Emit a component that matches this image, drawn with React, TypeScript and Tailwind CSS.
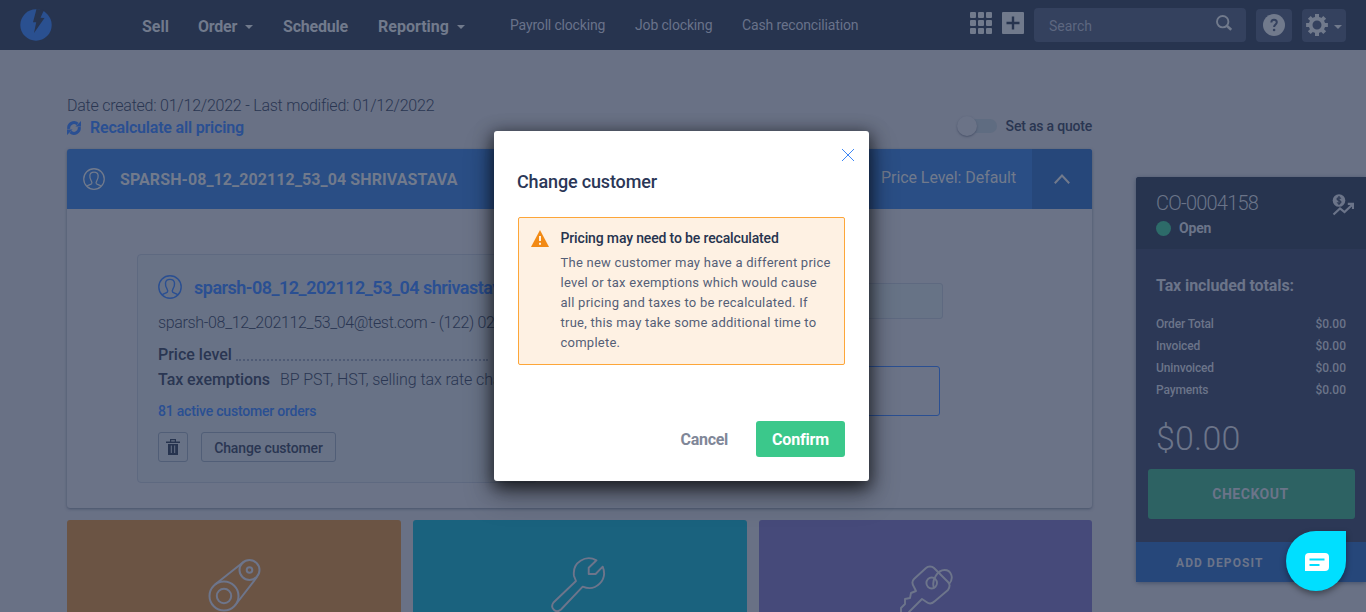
import React from "react";

function UserIcon({ className }: { className: string }) {
  return (
    <svg viewBox="0 0 24 24" className={className} fill="none" stroke="currentColor" strokeWidth="1.4" strokeLinejoin="round">
      <circle cx="12" cy="12" r="11.2" />
      <path d="M4.2 19.8c1.3-1.4 4.2-1.5 5.2-2.8.5-.7.2-2-.3-2.8-1.4-2-1.8-4.4-1.6-6.2C7.7 5.700 9.700 4.400 12 4.400s4.300 1.300 4.500 3.600c.2 1.800-.2 4.200-1.600 6.200-.5.800-.8 2.100-.3 2.800 1 1.300 3.900 1.400 5.200 2.800" />
    </svg>
  );
}

function Caret() {
  return (
    <svg viewBox="0 0 8 4" className="h-1 w-2 shrink-0" fill="currentColor">
      <path d="M0 0h8L4 4z" />
    </svg>
  );
}

function Header() {
  return (
    <header className="flex h-[50px] w-full shrink-0 bg-[#27344f] text-[#717a8c]">
      <div className="w-[142px] pt-[9px] pl-5">
        <svg viewBox="0 0 32 32" className="h-8 w-8">
          <circle cx="16" cy="16" r="15.700" fill="#2a5090" />
          <path d="M16.500 0L13 13.200h3.200L14 24 24.500 9l-4-.2L24 1z" fill="#27344f" />
        </svg>
      </div>
      <nav className="flex pt-4 text-base leading-[22px] font-bold whitespace-nowrap">
        <div className="w-14">Sell</div>
        <div className="flex h-[22px] w-[85px] items-center gap-2 tracking-[-0.25px]">Order <Caret /></div>
        <div className="w-[95px] tracking-[-0.2px]">Schedule</div>
        <div className="flex h-[22px] w-[132px] items-center gap-2">Reporting <Caret /></div>
      </nav>
      <nav className="flex pt-[15px] text-sm leading-5 whitespace-nowrap text-[#69728a]">
        <div className="w-[125px] tracking-[-0.17px]">Payroll clocking</div>
        <div className="w-[107px] tracking-[-0.15px]">Job clocking</div>
        <div className="w-[228px] tracking-[-0.14px]">Cash reconciliation</div>
      </nav>
      <div className="flex">
        <svg viewBox="0 0 22 22" className="mt-3 h-[22px] w-[22px]" fill="currentColor">
          {[0, 8, 16].map((y) => [0, 8, 16].map((x) => <rect key={`${x}-${y}`} x={x} y={y} width="6" height="6" rx="1" />))}
        </svg>
        <svg viewBox="0 0 22 22" className="mt-3 ml-[10px] h-[22px] w-[22px]">
          <rect width="22" height="22" rx="1" fill="currentColor" />
          <path d="M11 4.500v13M4.500 11h13" stroke="#27344f" strokeWidth="2.400" />
        </svg>
        <div className="mt-2 ml-[10px] flex h-[34px] w-[212px] justify-between rounded bg-[#34415e] pr-[14px] pl-[15px]">
          <span className="pt-2 text-sm leading-5 text-[#5d6780]">Search</span>
          <svg viewBox="0 0 16 16" className="mt-[7px] h-4 w-4" fill="none" stroke="currentColor">
            <circle cx="6.700" cy="6.700" r="5.700" strokeWidth="1.900" />
            <path d="M10.800 10.800l4.400 4" strokeWidth="2.600" />
          </svg>
        </div>
        <div className="mt-[9px] ml-[10px] flex h-[33px] w-9 justify-center rounded bg-[#34415e] pt-[5px]">
          <svg viewBox="0 0 22 22" className="h-[22px] w-[22px]">
            <circle cx="11" cy="11" r="11" fill="currentColor" />
            <path d="M8.300 8.500C8.300 6.800 9.400 5.800 11 5.800s2.800 1 2.800 2.500c0 2.100-2.700 2.300-2.700 4.700" fill="none" stroke="#34415e" strokeWidth="2" />
            <circle cx="11.100" cy="16" r="1.300" fill="#34415e" />
          </svg>
        </div>
        <div className="mt-[9px] ml-[10px] flex h-[33px] w-11 rounded bg-[#34415e] pl-1">
          <svg viewBox="0 0 22 22" className="mt-[5px] h-[22px] w-[22px]" stroke="currentColor">
            <circle cx="11" cy="11" r="6.400" fill="none" strokeWidth="3.800" />
            {[0, 45, 90, 135].map((a) => (
              <path key={a} d="M11 .1v4M11 17.900v4" strokeWidth="4" transform={`rotate(${a} 11 11)`} />
            ))}
          </svg>
          <div className="mt-[16px] ml-[6px]"><Caret /></div>
        </div>
      </div>
    </header>
  );
}

function CustomerBox() {
  return (
    <div className="mt-[45px] ml-[70px] h-[229px] w-[400px] rounded-sm border border-[#5e6980] bg-[#687286] pt-5 pl-5 whitespace-nowrap">
      <div className="flex h-6 items-center text-[#2a4f92]">
        <UserIcon className="h-6 w-6" />
        <span className="mt-[2px] ml-3 text-lg leading-6 font-semibold tracking-[-0.5px]">sparsh-08_12_202112_53_04 shrivastava</span>
      </div>
      <div className="mt-3 h-6 text-base leading-6 font-light tracking-[-0.34px]">sparsh-08_12_202112_53_04@test.com - (122) 021-2022</div>
      <div className="mt-2 flex h-6 text-base leading-6">
        <span className="w-[78px] font-medium">Price level</span>
        <span className="h-[18px] w-[252px] border-b-2 border-dotted border-[#4f5b75]" />
      </div>
      <div className="mt-px flex h-6 text-base leading-6">
        <span className="w-[122px] font-medium tracking-[-0.07px]">Tax exemptions</span>
        <span className="font-light tracking-[-0.08px]">BP PST, HST, selling tax rate changes</span>
      </div>
      <div className="mt-[7px] h-6 text-sm leading-6 font-medium tracking-[-0.21px] text-[#2a4f92]">81 active customer orders</div>
      <div className="mt-[9px] flex gap-[13px]">
        <div className="flex h-[30px] w-[30px] items-center justify-center rounded-[3px] border border-[#515e77]">
          <svg viewBox="0 0 14 16" className="h-4 w-[14px]">
            <path d="M0 2.500h14v1.500H0zM4 2.500V0h6v2.500H8.800V1.200H5.200v1.300zM2 5h10v11H2z" fill="#27344f" />
            <path d="M5.300 6.500v7.500M8.700 6.500v7.500" stroke="#687286" strokeWidth="1" />
          </svg>
        </div>
        <div className="h-[30px] w-[135px] rounded-[3px] border border-[#515e77] text-center text-sm leading-[30px] font-medium tracking-[-0.13px]">Change customer</div>
      </div>
    </div>
  );
}

function CustomerPanel() {
  return (
    <section className="mt-[10px] h-[359px] w-[1025px] overflow-hidden rounded-[3px] bg-[#6b7387] shadow-[0_1px_3px_#46526a]">
      <div className="flex h-[60px] bg-[#2a4e85] text-[#717a8c]">
        <div className="flex w-[814px] items-center pl-4">
          <UserIcon className="h-[22px] w-[22px]" />
          <span className="mt-[2px] ml-[15px] text-base leading-6 font-bold tracking-[0.08px] whitespace-nowrap">SPARSH-08_12_202112_53_04 SHRIVASTAVA</span>
        </div>
        <div className="w-[151px] pt-[17px] text-base leading-6 tracking-[-0.06px] whitespace-nowrap">Price Level: Default</div>
        <div className="flex w-[60px] items-center justify-center bg-[#26477a]">
          <svg viewBox="0 0 16 10" className="h-[10px] w-4" fill="none" stroke="currentColor" strokeWidth="2"><path d="M.8 9.200L8 1.500l7.200 7.700" /></svg>
        </div>
      </div>
      <div className="flex">
        <CustomerBox />
        <div className="ml-[36px] pt-[74px]">
          <div className="h-9 w-[370px] rounded-[3px] border border-[#5e6980] bg-[#677386]" />
          <div className="mt-[47px] h-[50px] w-[367px] rounded-[3px] border border-[#2a4f92]" />
        </div>
      </div>
    </section>
  );
}

function Tiles() {
  return (
    <div className="mt-3 flex h-[92px] gap-3 text-[#6d758b]">
      <div className="w-[334px] rounded-t-[3px] bg-[#6b5444] pt-[38px] pl-[141px]">
        <svg viewBox="0 0 54 54" className="h-[54px] w-[54px]" fill="none" stroke="currentColor" strokeWidth="2">
          <circle cx="16" cy="38" r="14.500" /><circle cx="16" cy="38" r="7.200" />
          <circle cx="41.500" cy="12" r="10" /><circle cx="41.500" cy="12" r="2.800" />
          <path d="M7 26.500L35.500 4M28.500 45.500L49 19" />
        </svg>
      </div>
      <div className="w-[334px] rounded-t-[3px] bg-[#1a627e] pt-[36px] pl-[137px]">
        <svg viewBox="0 0 56 56" className="h-14 w-14" fill="none" stroke="currentColor" strokeWidth="1.900" strokeLinejoin="round">
          <path d="M46.500 4.300C36-1.500 22 6 24 20L26 25 3.500 46.500C-.5 52 6 58 11 53.500L32.700 30.700C46 36 58 24 52.700 10.700L45.600 18H38.700V11.700z" />
        </svg>
      </div>
      <div className="w-[333px] rounded-t-[3px] bg-[#464a7a] pt-[44px] pl-[141px]">
        <svg viewBox="0 0 54 54" className="h-[54px] w-[54px]" fill="none" stroke="currentColor" strokeWidth="1.900" strokeLinejoin="round">
          <path d="M26 4c2-2 6-2 8 0l14 14c2 2 2 5 0 8L35 37c-3 3-6 3-8.500 1L22 35 9 48v6H1V44l4-4v-5l5-1 1-5 5-2-2-4c-2-3-2-6 0-8z" />
          <ellipse cx="31.700" cy="19" rx="5.300" ry="5.500" />
          <path d="M34 24C31 16 38 6 44.500 6 51 6 54.500 14 49 20" />
        </svg>
      </div>
    </div>
  );
}

function Summary() {
  const rows = ["Order Total", "Invoiced", "Uninvoiced", "Payments"];
  return (
    <aside className="mt-[127px] h-[405px] w-[230px] shrink-0 rounded-l-[3px] bg-[#2c3856] text-[#6b7489] shadow-[0_1px_4px_#46526a]">
      <div className="flex h-[72px] justify-between rounded-tl-[3px] bg-[#27344f] pt-[14px] pr-3 pl-5">
        <div>
          <div className="text-xl leading-6 font-light tracking-[-0.78px]">CO-0004158</div>
          <div className="mt-[2px] flex items-center gap-2 text-sm leading-[22px] font-bold tracking-[-0.2px]">
            <span className="h-[15px] w-[15px] rounded-full bg-[#2d6b69]" />Open
          </div>
        </div>
        <svg viewBox="0 0 22 22" className="mt-[3px] h-[22px] w-[22px]">
          <circle cx="7" cy="6.500" r="6.300" fill="currentColor" />
          <path d="M9 4.500C8 3.300 5 3.500 5 5c0 2 4 1.100 4 3 0 1.700-3 1.700-4 .5M7 2v9" fill="none" stroke="#27344f" strokeWidth="1.100" />
          <path d="M1.500 20.500l6.500-6 4.500 3.500 7.500-7M15.800 9.800h5.200V15" fill="none" stroke="currentColor" strokeWidth="2.200" />
        </svg>
      </div>
      <div className="pt-[25px] pl-5 text-base leading-6 font-bold tracking-[-0.1px]">Tax included totals:</div>
      <div className="mt-[15px] pr-5 pl-5 text-xs leading-[22px] font-medium">
        {rows.map((r) => <div key={r} className="flex justify-between"><span className="tracking-[-0.15px]">{r}</span><span>$0.00</span></div>)}
      </div>
      <div className="mt-[17px] h-10 pl-5 text-[34px] leading-10 font-light tracking-[0.2px]">$0.00</div>
      <div className="mt-[11px] ml-3 h-[50px] w-[207px] rounded-[3px] bg-[#2d6263] pr-[2px] text-center text-sm leading-[50px] font-bold tracking-[0.5px]">CHECKOUT</div>
      <div className="mt-[23px] h-10 bg-[#26477a] pl-10 text-xs leading-[42px] font-bold tracking-[1.1px]">ADD DEPOSIT</div>
    </aside>
  );
}

function Modal() {
  return (
    <div className="absolute top-[131px] left-[494px] h-[350px] w-[375px] rounded-[3px] bg-white shadow-[0_11px_15px_-7px_rgba(0,0,0,0.3),0_14px_28px_3px_rgba(0,0,0,0.25),0_4px_16px_3px_rgba(0,0,0,0.5)]">
      <div className="flex justify-end pt-[18px] pr-[15px]">
        <svg viewBox="0 0 12 12" className="h-3 w-3" stroke="#3f87f5" strokeWidth="1"><path d="M0 0l12 12M12 0L0 12" /></svg>
      </div>
      <h2 className="mt-[9px] ml-[23px] text-lg leading-6 font-medium tracking-[-0.15px] text-[#2b3757]">Change customer</h2>
      <div className="mt-[23px] ml-6 flex h-[148px] w-[327px] rounded-[2px] border border-[#fda639] bg-[#fef1e3] pl-3">
        <svg viewBox="0 0 18 17" className="mt-3 h-[17px] w-[18px] shrink-0"><path d="M9 0l9 17H0z" fill="#f28a15" /><path d="M9 6v5M9 12.700v2" stroke="#fef1e3" strokeWidth="2" /></svg>
        <div className="ml-[11.500px] whitespace-nowrap">
          <div className="mt-2 text-sm leading-6 font-medium tracking-[-0.15px] text-[#27344f]">Pricing may need to be recalculated</div>
          <p className="mt-[3px] text-[13px] leading-5 tracking-[0.25px] text-[#555f77]">
            The new customer may have a different price<br />level or tax exemptions which would cause<br />all pricing and taxes to be recalculated. If<br />true, this may take some additional time to<br />complete.
          </p>
        </div>
      </div>
      <div className="mt-14 mr-6 flex items-center justify-end text-base font-bold">
        <button className="mt-[2px] mr-7 tracking-[-0.3px] text-[#808798]">Cancel</button>
        <button className="h-9 w-[89px] rounded-[3px] bg-[#3bc88b] pt-[2px] tracking-[-0.15px] text-white">Confirm</button>
      </div>
    </div>
  );
}

export default function App() {
  return (
    <div className="relative flex h-[612px] w-[1366px] flex-col overflow-hidden bg-[#697185] font-['Roboto',sans-serif] text-[#2a3652]">
      <Header />
      <div className="flex h-[562px]">
        <main className="ml-[67px] w-[1069px] shrink-0 pt-11">
          <div className="flex w-[1025px] justify-between whitespace-nowrap">
            <div>
              <div className="text-base leading-6 font-light tracking-[-0.23px]">Date created: 01/12/2022 - Last modified: 01/12/2022</div>
              <div className="flex h-[21px] items-center text-[#2a4f92]">
                <svg viewBox="0 0 14 14" className="-mt-px h-[14px] w-[14px]" fill="none" stroke="currentColor" strokeWidth="3">
                  <path d="M1.800 8A5.300 5.300 0 0 1 10.500 3M12.200 6A5.300 5.300 0 0 1 3.500 11" />
                  <path d="M8.500 5.500H14V0zM5.500 8.500H0V14z" fill="currentColor" stroke="none" />
                </svg>
                <span className="-mt-px ml-[9px] text-base font-semibold tracking-[-0.19px]">Recalculate all pricing</span>
              </div>
            </div>
            <div className="flex pt-[21px]">
              <div className="mt-[4px] h-[14px] w-[38px] rounded-full bg-[#5f6c81]">
                <div className="-mt-[3px] -ml-[2px] h-5 w-5 rounded-full bg-[#6b7387] shadow-[0_1px_2px_#485269]" />
              </div>
              <span className="ml-[9px] text-sm leading-[22px] font-medium tracking-[-0.2px]">Set as a quote</span>
            </div>
          </div>
          <CustomerPanel />
          <Tiles />
        </main>
        <Summary />
      </div>
      <Modal />
      <button className="absolute top-[531px] left-[1286px] flex h-[60px] w-[60px] items-center justify-center rounded-full rounded-tr-[6px] bg-[#00dfff] shadow-[0_3px_6px_rgba(0,0,0,0.4)]">
        <svg viewBox="0 0 24 18" className="mt-[2px] ml-[2px] h-[18px] w-6"><path d="M4 0h16a4 4 0 0 1 4 4v10a4 4 0 0 1-4 4H0V4a4 4 0 0 1 4-4z" fill="white" /><path d="M4.500 6.500h15M4.500 12h10" stroke="#00dfff" strokeWidth="2" /></svg>
      </button>
    </div>
  );
}
